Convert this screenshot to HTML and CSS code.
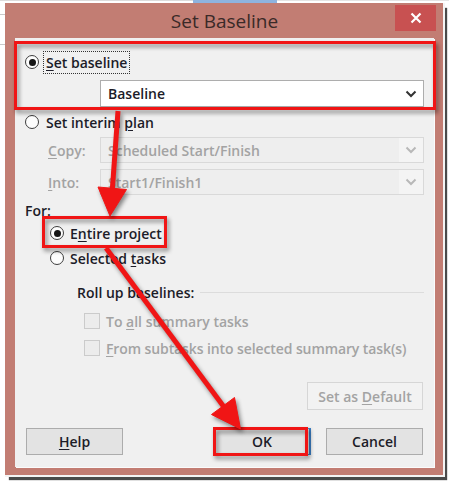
FILE: index.html
```html
<!DOCTYPE html>
<html>
<head>
<meta charset="utf-8">
<link rel="stylesheet" href="styles.css">
</head>
<body>
<div class="stage">
  <div class="topstrip"><span class="seg-gray"></span><span class="seg-blue"></span><span class="seg-gray2"></span></div>
  <div class="window">
    <div class="titlebar">
      <div class="title">Set Baseline</div>
      <div class="close"><svg width="12" height="12" viewBox="0 0 12 12"><path d="M1.5 1.5 L10.5 10.5 M10.5 1.5 L1.5 10.5" stroke="#fff" stroke-width="2.2" fill="none"/></svg></div>
    </div>
    <div class="panel">
      <div class="row r-setbase">
        <span class="radio checked"></span>
        <span class="label strong focus"><u>S</u>et baseline</span>
      </div>
      <div class="combo combo-main">
        <span class="combo-text">Baseline</span>
        <span class="combo-btn"><svg width="12" height="8" viewBox="0 0 12 8"><polyline points="1.5,1.5 6,6 10.5,1.5" fill="none" stroke="#333" stroke-width="2"/></svg></span>
      </div>
      <div class="row r-interim">
        <span class="radio"></span>
        <span class="label">Set interim <u>p</u>lan</span>
      </div>
      <div class="field-row fr-copy">
        <span class="field-label dim"><u>C</u>opy:</span>
        <div class="combo combo-dis">
          <span class="combo-text">Scheduled Start/Finish</span>
          <span class="combo-btn"><svg width="12" height="8" viewBox="0 0 12 8"><polyline points="1.5,1.5 6,6 10.5,1.5" fill="none" stroke="#b8b8b8" stroke-width="2"/></svg></span>
        </div>
      </div>
      <div class="field-row fr-into">
        <span class="field-label dim"><u>I</u>nto:</span>
        <div class="combo combo-dis">
          <span class="combo-text">Start1/Finish1</span>
          <span class="combo-btn"><svg width="12" height="8" viewBox="0 0 12 8"><polyline points="1.5,1.5 6,6 10.5,1.5" fill="none" stroke="#b8b8b8" stroke-width="2"/></svg></span>
        </div>
      </div>
      <div class="row r-for"><span class="label">For:</span></div>
      <div class="row r-entire">
        <span class="radio checked"></span>
        <span class="label strong">E<u>n</u>tire project</span>
      </div>
      <div class="row r-selected">
        <span class="radio"></span>
        <span class="label">Selected <u>t</u>asks</span>
      </div>
      <div class="row r-rollup">
        <span class="label">Roll up baselines:</span>
        <span class="group-line"></span>
      </div>
      <div class="row r-check1">
        <span class="check"></span>
        <span class="label dim">To <u>a</u>ll summary tasks</span>
      </div>
      <div class="row r-check2">
        <span class="check"></span>
        <span class="label dim"><u>F</u>rom subtasks into selected summary task(s)</span>
      </div>
      <div class="default-row">
        <span class="btn btn-dis"><span>Set as <u>D</u>efault</span></span>
      </div>
      <div class="button-row">
        <span class="btn"><span><u>H</u>elp</span></span>
        <span class="btn btn-ok"><span>OK</span></span>
        <span class="btn"><span>Cancel</span></span>
      </div>
    </div>
  </div>

  <div class="hl hl-top"></div>
  <div class="hl hl-entire"></div>
  <div class="hl hl-ok"></div>
  <svg class="arrows" width="449" height="484" viewBox="0 0 449 484">
    <g fill="#f01515" stroke="#f01515">
      <line x1="118" y1="111" x2="112.3" y2="190" stroke-width="5"/>
      <polygon points="98,187 126.5,189.5 110,216" stroke-width="1" stroke-linejoin="round"/>
      <line x1="106" y1="248" x2="224" y2="407" stroke-width="5"/>
      <polygon points="211.5,414.5 234.5,397.5 240.5,429" stroke-width="1" stroke-linejoin="round"/>
    </g>
  </svg>
</div>
</body>
</html>
```

FILE: styles.css
```css
* { box-sizing: border-box; }
html, body { margin: 0; padding: 0; }
body {
  background: #ffffff;
  width: 449px;
  height: 484px;
  overflow: hidden;
  font-family: "Open Sans", "Noto Sans", "Liberation Sans", sans-serif;
}
.stage {
  position: relative;
  width: 449px;
  height: 484px;
  background:
    linear-gradient(#c9c9c9, #c9c9c9) 0 14px / 5px 1px no-repeat,
    linear-gradient(#c9c9c9, #c9c9c9) 0 44px / 5px 1px no-repeat,
    #ffffff;
}
.topstrip {
  display: flex;
  height: 3px;
}
.seg-gray { width: 193px; height: 1px; background: #dcdcdc; }
.seg-blue { width: 84px; height: 3px; background: #8db3df; }
.seg-gray2 { flex: 1; height: 1px; background: #e4e4e4; }

.window {
  margin-left: 5px;
  width: 438px;
  height: 472px;
  background: #c27d73;
  display: flex;
  flex-direction: column;
  padding: 0 9px 8px 10px;
  box-shadow: 1px 1px 0 1px #f4f4f4, 4px 5px 1px 0 #4a4a4a;
}
.titlebar {
  height: 35px;
  display: flex;
  align-items: center;
  justify-content: center;
  position: relative;
}
.title {
  font-family: "Open Sans", "Noto Sans", sans-serif;
  font-size: 19px;
  color: #3a2a28;
  margin-left: 0;
  margin-top: 1px;
}
.close {
  position: absolute;
  right: -2px;
  top: 2px;
  width: 41px;
  height: 26px;
  background: #c85151;
  display: flex;
  align-items: center;
  justify-content: center;
}
.panel {
  flex: 1;
  background: #f0f0f0;
  box-shadow: 1px 1px 0 0 #fbfbfb;
  padding: 0 10px 12px 0;
  font-size: 14px;
  font-weight: 600;
  color: #1c1c28;
  display: flex;
  flex-direction: column;
}
u { text-decoration-thickness: 1px; text-underline-offset: 2px; }

.row {
  height: 20px;
  display: flex;
  align-items: center;
  white-space: nowrap;
}
.radio {
  width: 14px;
  height: 14px;
  border-radius: 50%;
  border: 1px solid #3d3d3d;
  background: #fdfdfd;
  flex: none;
  display: flex;
  align-items: center;
  justify-content: center;
  margin-right: 7px;
}
.radio.checked::after {
  content: "";
  width: 7px;
  height: 7px;
  border-radius: 50%;
  background: #151515;
}
.check {
  width: 16px;
  height: 16px;
  border: 1px solid #cbcbcb;
  background: #ececec;
  flex: none;
  margin-right: 6px;
}
.dim { color: #a3a3a3; }
.focus {
  outline: 1px dotted #333;
  outline-offset: 1px;
  padding: 0 1px;
  margin-left: -1px;
}
.r-check2 .label { letter-spacing: -0.1px; }

.r-setbase { margin-top: 14px; padding-left: 10px; }
.combo-main { margin-top: 8px; }
.r-interim { margin-top: 5px; padding-left: 10px; }
.fr-copy { margin-top: 5px; }
.fr-into { margin-top: 6px; }
.r-for { margin-top: 5px; padding-left: 10px; }
.r-entire { margin-top: 3px; padding-left: 35px; }
.r-entire .radio, .r-selected .radio { margin-right: 6px; }
.r-selected { margin-top: 5px; padding-left: 35px; }
.r-rollup { margin-top: 14px; padding-left: 62px; }
.group-line {
  flex: 1;
  height: 1px;
  background: #dcdcdc;
  margin-left: 6px;
  margin-top: 1px;
}
.r-check1 { margin-top: 9px; padding-left: 69px; }
.r-check2 { margin-top: 7px; padding-left: 69px; }

.combo {
  margin-left: 85px;
  width: 324px;
  height: 27px;
  display: flex;
  align-items: stretch;
  border: 1px solid #adadad;
  background: #ffffff;
}
.combo-text {
  flex: 1;
  display: flex;
  align-items: center;
  padding-left: 7px;
  white-space: nowrap;
}
.combo-btn {
  width: 24px;
  display: flex;
  align-items: center;
  justify-content: center;
}
.field-row {
  display: flex;
  align-items: center;
  height: 26px;
}
.field-label {
  width: 85px;
  padding-left: 33px;
  flex: none;
}
.field-row .combo {
  margin-left: 0;
  height: 26px;
  border-color: #d9d9d9;
  background: #f4f4f4;
  color: #a3a3a3;
}
.field-row .combo-text { background: #eeeeee; }

.default-row {
  margin-top: 24px;
  display: flex;
  justify-content: flex-end;
  padding-right: 1px;
}
.btn {
  height: 27px;
  width: 97px;
  display: flex;
  align-items: center;
  justify-content: center;
  background: #e3e3e3;
  border: 1px solid #acacac;
  white-space: nowrap;
}
.btn-dis {
  width: 116px;
  height: 28px;
  background: #f2f2f2;
  border-color: #d6d6d6;
  color: #a3a3a3;
}
.btn-ok { border-color: #4a8ed0 #3c7fc4 #3c7fc4 #acacac; border-right-width: 2px; }
.button-row {
  margin-top: 18px;
  display: flex;
  padding-left: 11px;
  padding-right: 1px;
}
.button-row .btn:nth-child(2) { margin-left: 91px; }
.button-row .btn:nth-child(3) { margin-left: auto; }

.hl {
  position: absolute;
  border: 3px solid #f01515;
  filter: drop-shadow(2px 3px 2px rgba(0,0,0,0.45));
}
.hl-top { left: 14px; top: 41px; width: 422px; height: 69px; }
.hl-entire { left: 42px; top: 216px; width: 125px; height: 32px; }
.hl-ok { left: 213px; top: 427px; width: 95px; height: 29px; }
.arrows {
  position: absolute;
  left: 0;
  top: 0;
  filter: drop-shadow(2px 3px 2px rgba(0,0,0,0.45));
}
```
